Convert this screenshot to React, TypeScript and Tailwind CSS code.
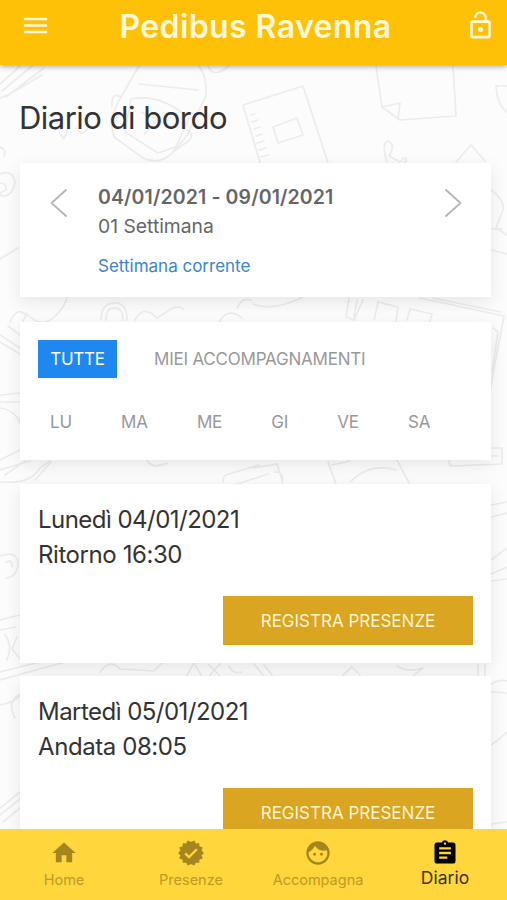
import type { ReactNode } from "react";
import { MdAssignment, MdFace, MdHome, MdLockOpen, MdMenu } from "react-icons/md";
import clsx from "clsx";

const days = ["LU", "MA", "ME", "GI", "VE", "SA"];

const trips = [
  { day: "Lunedì 04/01/2021", trip: "Ritorno 16:30" },
  { day: "Martedì 05/01/2021", trip: "Andata 08:05" },
];

function BadgeIcon({ className }: { className?: string }) {
  return (
    <svg viewBox="0 0 24 24" className={className}>
      <path
        fill="currentColor"
        stroke="currentColor"
        strokeWidth="1"
        strokeLinejoin="round"
        d="M14.7 1.9 15.9 4.4 18.6 4.1 18.8 6.8 21.5 7.6 20.4 10.1 22.4 12 20.4 13.9 21.5 16.4 18.8 17.2 18.6 19.9 15.9 19.6 14.7 22.1 12 20.9 9.3 22.1 8.1 19.6 5.4 19.9 5.2 17.2 2.5 16.4 3.6 13.9 1.6 12 3.6 10.1 2.5 7.6 5.2 6.8 5.4 4.1 8.1 4.4 9.3 1.9 12 3.1Z"
      />
      <path d="M7 12.3 10.3 15.5 17 8.8" fill="none" stroke="#ffd63c" strokeWidth="2" />
    </svg>
  );
}

const tabs = [
  { label: "Home", icon: MdHome },
  { label: "Presenze", icon: BadgeIcon },
  { label: "Accompagna", icon: MdFace },
  { label: "Diario", icon: MdAssignment, active: true },
];

// school supplies pattern behind the cards
function Doodles() {
  return (
    <svg
      className="pointer-events-none absolute inset-0"
      width="507"
      height="900"
      viewBox="0 0 507 900"
      fill="none"
      stroke="#ececec"
      strokeWidth="1.7"
      strokeLinecap="round"
      strokeLinejoin="round"
    >
      {/* pencil */}
      <path d="M0 84 20 66M2 91 32 66M6 97 44 68M0 98 8 95 42 75" />
      {/* backpack */}
      <path d="M139 66 121 97Q112 110 112 128L114 137 143 158Q158 165 170 155L187 136 194 120 206 96Q207 76 199 66M139 84 198 90M121 97Q111 91 112 107M131 99Q160 93 189 118L176 147 158 153 125 132ZM141 112 172 127M145 134l12-14M187 130q9 5 0 12l-14 10" />
      <path d="M208 66q5 13 21 0M59 132l5 7 4-9M76 128q7 10 11 0" />
      {/* notebook */}
      <path d="M243 105 303 86 329 166M243 105 261 166M273 127 297 118 303 135 278 143Z" />
      <path d="M250 115l5-1M252 122l6-2M254 129l6-2M256 136l6-2M257 143l7-2M259 150l7-2M261 157l7-2" />
      {/* sheet with folded corner */}
      <path d="M376 66 382 107 400 120 456 116 453 66M382 107 400 103 398 119" />
      {/* scissors */}
      <path d="M387 162q-6-18 1-21 8 3 1 15l11 6q7-8 6-1-5 8-14 2M456 162l15-17 14 16" />
      <path d="M496 86h11M496 86q1 18 11 27" />
      {/* left edge */}
      <path d="M0 147q7 2 4 9M0 174q13-5 15 9-4 16-15 12M0 183q7 0 6 7l-6 3M0 259l18-11" />
      <path d="M10 322q8-17 16-6l-6 10M26 313q16 17 29 3 10-9 12-19M0 335l20 13M0 342l20 12M8 326l12 9M0 395l20-2M0 402l20 0M0 408q14 2 20 14M0 460l20-10M0 470l30-9M0 482q30 3 40-14l10-7M5 475l20-14M35 480l16-18" />
      {/* right edge */}
      <path d="M491 190q14 10 12 20l-7 18 11 7M491 250l16 4M492 229h10" />
      {/* strip between week and filters */}
      <path d="M101 320q0-17 14-17 12 0 12 17M106 320q0-12 8-12 9 0 9 12M135 320q8-16 22-2l8-5q13-10 18-4M220 321q8-14 22-3M237 308q5-11 14-8M253 304q20 8 50-7" />
      <path d="M349 298l-3 19 8 3 9-20M357 300l-3 17M374 320l4-18 20 5-2 14M407 320l3-11 22 5-2 7M420 298 504 316 490 390M433 298l68 14M493 328l5 4-6 40" />
      {/* strip between filters and trips */}
      <path d="M147 460q5 10 20 3M223 482q0-8 6-8l30-9M228 487l40-13M253 468l24-4 5 16M275 472q10 0 7 11M328 462l8 22M332 465l18-4M350 482q20-20 46-12M397 460l12 23M450 460q-3 6 4 6l48-2V448h-10M456 456h42" />
      {/* below the first trip */}
      <path d="M0 556q18-6 18 8-1 13-12 14M6 562q7-3 6 5M0 620l20-5M0 630l16-3M5 635q8 10 2 25M17 637l-5 12 8 10M0 672l44-11M0 680l65-18M0 705q12-2 20-9M20 694q-14 8-5 24M0 808l20-16M0 815l20-16M3 822l17-14" />
      <path d="M100 672q10-14 20-3l34 2 8-8M187 675l7-12 7 12M208 664l12 12M220 664l-10 11M229 666q4 9 13 6M254 664l9 11M264 665l8 10M343 675l9-8 8 8M397 666q10 7 26 2l-10 8M478 664v12M485 664v12" />
      <path d="M491 505l16-3M491 517l16-4M491 560l16-12M491 574l16-7M491 581l16-2M491 684q9-5 16-3M491 692l16 1M491 745q9-6 16-13M491 824l16-2" />
    </svg>
  );
}

function Card({ className, children }: { className?: string; children: ReactNode }) {
  return (
    <section className={clsx("bg-white shadow-[0_5px_16px_rgba(0,0,0,0.09)]", className)}>
      {children}
    </section>
  );
}

function Chevron({ flip }: { flip?: boolean }) {
  return (
    <svg
      width="18"
      height="30"
      viewBox="0 0 18 30"
      fill="none"
      stroke="#b3b3b3"
      strokeWidth="1.7"
      className={clsx("mt-[25px] shrink-0", flip && "rotate-180")}
    >
      <path d="M16.5 1.5 1.5 15l15 13.5" />
    </svg>
  );
}

export default function App() {
  return (
    <div className="relative flex h-[900px] w-[507px] flex-col overflow-hidden bg-[#fcfcfc] font-['Inter','Liberation_Sans',sans-serif] text-[#333]">
      <Doodles />
      <header className="relative z-10 flex h-[65px] shrink-0 items-start justify-between bg-[#ffc107] pr-[11px] pl-5 text-[#fff8d8] shadow-[0_2px_5px_rgba(0,0,0,0.3)]">
        <MdMenu className="mt-[10px] size-[31px]" />
        <h1 className="mt-[7px] mr-[5px] text-[32px] leading-[40px] font-semibold tracking-[0.4px]">
          Pedibus Ravenna
        </h1>
        <MdLockOpen className="mt-[10px] size-[31px]" />
      </header>

      <main className="relative min-h-0 flex-1 overflow-hidden pr-4 pl-5">
        <h2 className="mt-[33px] -ml-px h-[65px] text-[31px] leading-[40px] tracking-[-0.52px]">
          Diario di bordo
        </h2>

        <Card className="flex h-[134px] justify-between pr-[29px] pl-[30px]">
          <Chevron />
          <div className="mr-auto ml-[30px] text-[#666]">
            <div className="mt-[20px] text-[19.5px] leading-[29px] font-semibold tracking-[0.12px]">
              04/01/2021 - 09/01/2021
            </div>
            <div className="text-[19.3px] leading-[29px]">01 Settimana</div>
            <a className="mt-[11px] block text-[17px] leading-[28px] text-[#3a86cc]">
              Settimana corrente
            </a>
          </div>
          <Chevron flip />
        </Card>

        <Card className="mt-[25px] h-[138px] px-[18px] pt-[18px] text-[17px] leading-[38px] tracking-[-0.22px] text-[#999]">
          <div className="flex gap-[25px]">
            <button className="h-[38px] w-[79px] bg-[#1e87f0] text-white">TUTTE</button>
            <button className="h-[38px] px-[12px]">MIEI ACCOMPAGNAMENTI</button>
          </div>
          <div className="mt-[25px] flex gap-[25px]">
            {days.map((d) => (
              <button key={d} className="h-[38px] px-[12.1px]">
                {d}
              </button>
            ))}
          </div>
        </Card>

        <div className="mt-[24px] flex flex-col gap-[13px]">
          {trips.map((t) => (
            <Card key={t.day} className="h-[179px] px-[18px] pt-[19px]">
              <div className="text-[24px] leading-[34.5px] tracking-[-0.53px]">{t.day}</div>
              <div className="text-[24px] leading-[34.5px] tracking-[-0.42px]">{t.trip}</div>
              <button className="mt-[24px] ml-auto block h-[49px] w-[250px] bg-[#daa520] pt-[2px] text-[17px] text-[#fdf3d5]">
                REGISTRA PRESENZE
              </button>
            </Card>
          ))}
        </div>
      </main>

      <nav className="relative z-10 grid h-[71px] shrink-0 grid-cols-[repeat(4,127px)] bg-[#ffd63c]">
        {tabs.map(({ label, icon: Icon, active }) => (
          <a
            key={label}
            className={clsx(
              "flex flex-col items-center pt-[10px] pl-px",
              active ? "text-black" : "text-[#a5851f]",
            )}
          >
            <Icon className="size-[28px]" />
            <span
              className={clsx(
                active
                  ? "text-[17.5px] leading-[22px] text-[#3b3110]"
                  : "mt-[2px] text-[14.5px] leading-[22px] text-[#c09a25]",
              )}
            >
              {label}
            </span>
          </a>
        ))}
      </nav>
    </div>
  );
}
